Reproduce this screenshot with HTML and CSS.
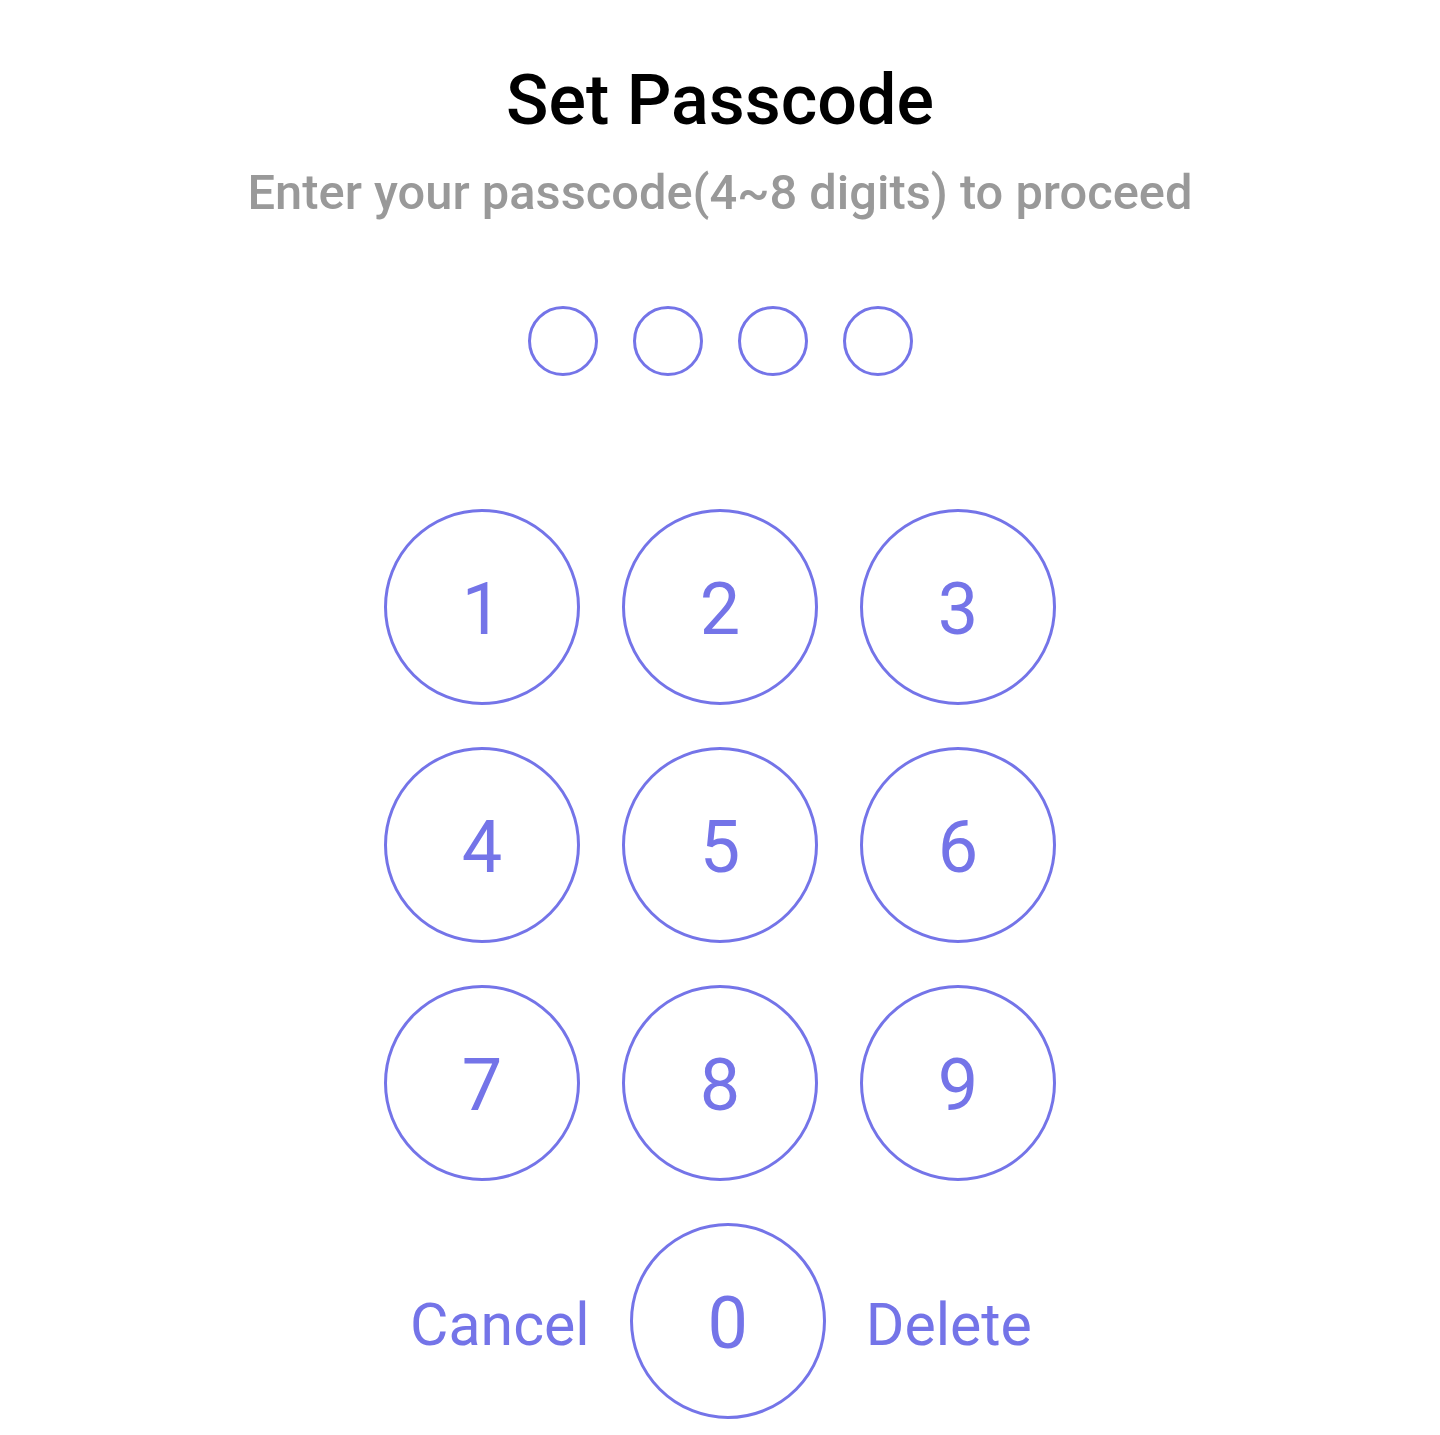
FILE: index.html
```html
<!DOCTYPE html>
<html lang="en">
<head>
    <meta charset="UTF-8">
    <meta name="viewport" content="width=device-width, initial-scale=1.0">
    <title>Set Passcode</title>
    <link rel="stylesheet" href="styles.css">
</head>
<body>
    <div class="screen">
        <h1 class="title">Set Passcode</h1>
        <p class="subtitle">Enter your passcode(4~8 digits) to proceed</p>

        <div class="dots">
            <span class="dot"></span>
            <span class="dot"></span>
            <span class="dot"></span>
            <span class="dot"></span>
        </div>

        <div class="keypad">
            <button class="key">1</button>
            <button class="key">2</button>
            <button class="key">3</button>
            <button class="key">4</button>
            <button class="key">5</button>
            <button class="key">6</button>
            <button class="key">7</button>
            <button class="key">8</button>
            <button class="key">9</button>
        </div>

        <div class="bottom-row">
            <button class="text-btn">Cancel</button>
            <button class="key">0</button>
            <button class="text-btn">Delete</button>
        </div>
    </div>
</body>
</html>
```

FILE: styles.css
```css
body{
    margin: 0;
    background: #fff;
    font-family: Roboto, "Liberation Sans", sans-serif;
}
.screen{
    display: flex;
    flex-direction: column;
    align-items: center;
    padding-top: 56px;
}
.title{
    margin: 0;
    font-size: 70px;
    font-weight: 500;
    line-height: 88px;
    color: #000;
}
.subtitle{
    margin: 19px 0 0 0;
    font-size: 48.8px;
    font-weight: 500;
    line-height: 60px;
    color: #999;
}
.dots{
    display: flex;
    gap: 35px;
    margin-top: 83px;
}
.dot{
    width: 70px;
    height: 70px;
    box-sizing: border-box;
    border: 3.5px solid #7474e8;
    border-radius: 50%;
}
.keypad{
    display: grid;
    grid-template-columns: repeat(3, 196px);
    gap: 42px;
    margin-top: 133px;
}
.key{
    width: 196px;
    height: 196px;
    box-sizing: border-box;
    border: 3.5px solid #7474e8;
    border-radius: 50%;
    background: #fff;
    color: #7474e8;
    font-family: Roboto, "Liberation Sans", sans-serif;
    font-size: 72px;
    padding: 6px 0 0 0;
    line-height: 1;
    cursor: pointer;
}
.bottom-row{
    display: flex;
    align-items: center;
    gap: 40px;
    margin-top: 42px;
    padding-left: 2px;
}
.text-btn{
    border: none;
    background: none;
    padding: 0;
    color: #7474e8;
    font-family: Roboto, "Liberation Sans", sans-serif;
    font-size: 59px;
    line-height: 1;
    padding-top: 6px;
    cursor: pointer;
}
```
